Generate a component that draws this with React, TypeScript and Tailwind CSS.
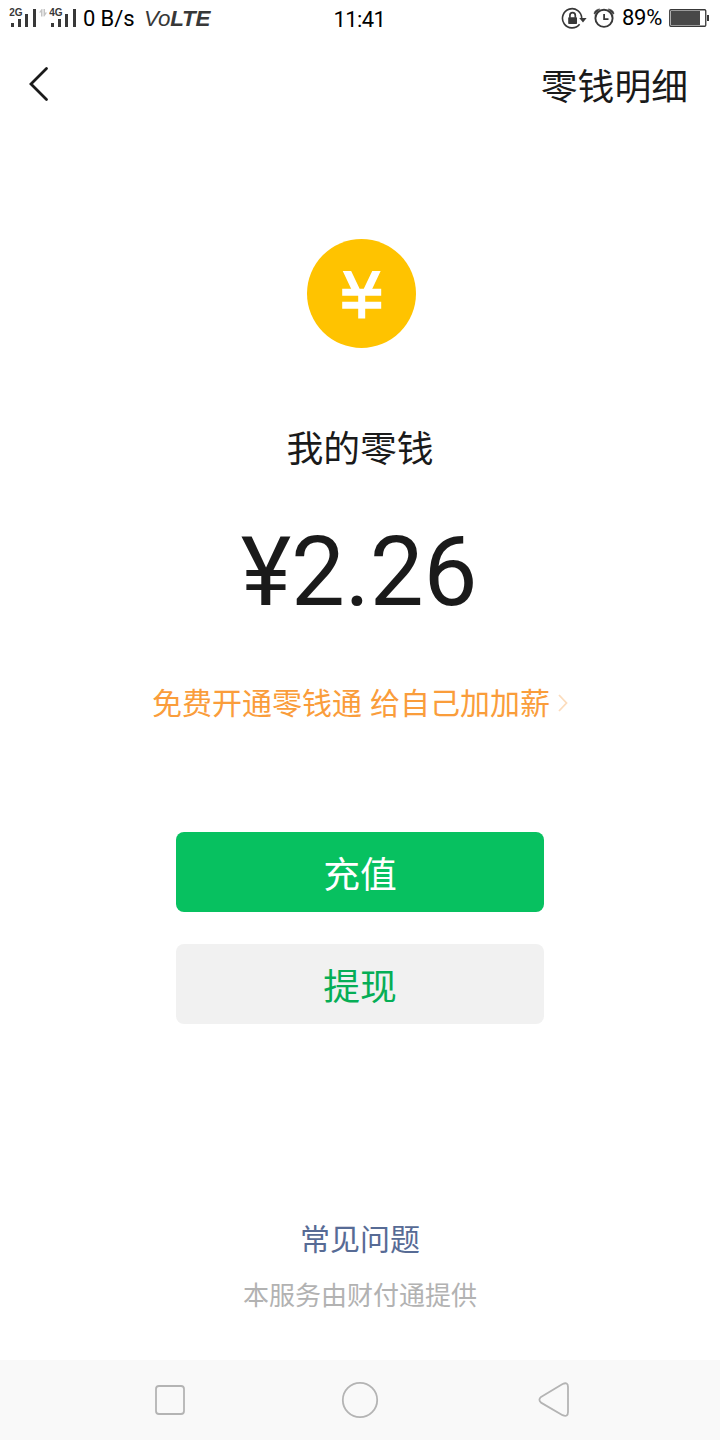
function SignalBars({ label }: { label: string }) {
  return (
    <svg width="28" height="26" viewBox="0 -6 28 26" className="shrink-0">
      <text x="0.3" y="7.4" fontSize="10" fontWeight="700" fill="#383838" fontFamily="Liberation Sans, sans-serif">
        {label}
      </text>
      <g fill="#383838">
        <rect x="2" y="14" width="3" height="4" />
        <rect x="9" y="10" width="3" height="8" />
        <rect x="16" y="5" width="3" height="13" />
        <rect x="24" y="0" width="3" height="18" />
      </g>
    </svg>
  );
}

function SignalStatus() {
  return (
    <div className="flex pt-[3px]">
      <SignalBars label="2G" />
      <svg width="8" height="8" viewBox="0 0 8 8" className="ml-[2px] mt-1.5">
        <path d="M0 3.6L2.6 0h.9v7.4H2V3.6zM4.5 0H6v3.6h2L5.4 7.4h-.9z" fill="#c4c4c4" />
      </svg>
      <div className="ml-[2px]">
        <SignalBars label="4G" />
      </div>
    </div>
  );
}

function StatusBar() {
  return (
    <div className="grid h-10 grid-cols-[1fr_auto_1fr] pl-[9px] pr-[10px] text-[22px] leading-[37px] text-black">
      {/* Left */}
      <div className="flex">
        <SignalStatus />
        <span className="ml-1.5 w-[61px] whitespace-nowrap tracking-[-0.1px]">0 B/s</span>
        <span className="whitespace-nowrap font-['Liberation_Sans'] text-[22.4px] italic leading-[38px] tracking-[-0.2px] text-[#383838]">
          Vo<b>LTE</b>
        </span>
      </div>

      {/* Center */}
      <div className="tracking-[-0.6px] leading-[39px]">11:41</div>

      {/* Right */}
      <div className="flex justify-end">
        <svg width="26" height="24" viewBox="0 0 26 24" className="mt-[7px]">
          <path d="M18.6 17.3A9.6 9.6 0 1 1 20.7 11.3" fill="none" stroke="#383838" strokeWidth="1.6" />
          <path d="M18.2 11h7.4l-3.6 4.6z" fill="#383838" />
          <rect x="7.2" y="10.2" width="8.8" height="6.8" rx="0.7" fill="#383838" />
          <path d="M8.9 10.8V8.4a2.7 2.7 0 0 1 5.4 0v2.4" fill="none" stroke="#383838" strokeWidth="1.7" />
        </svg>
        <svg width="22" height="22" viewBox="0 0 22 22" className="ml-[6px] mt-[7px]">
          <g fill="none" stroke="#383838">
            <circle cx="11" cy="11.3" r="8.6" strokeWidth="1.9" />
            <path d="M11.1 6.9v5.3h4.4" strokeWidth="1.8" />
          </g>
          <path d="M1 6.8Q1.6 2.4 6.8 2L1.9 6.9zM21 6.8Q20.4 2.4 15.2 2L20.1 6.9z" fill="#383838" stroke="#383838" strokeWidth="0.6" />
        </svg>
        <span className="ml-[7px] w-[47px] whitespace-nowrap leading-[36px] tracking-[-0.3px]">89%</span>
        <svg width="41" height="20" viewBox="0 0 41 20" className="mt-2">
          <rect x="0.75" y="1.75" width="36" height="16.5" rx="1" fill="none" stroke="#383838" strokeWidth="1.3" />
          <rect x="2" y="3" width="29" height="14" fill="#484848" />
          <rect x="38" y="7" width="2" height="6" fill="#383838" />
        </svg>
      </div>
    </div>
  );
}

function CoinIcon() {
  return (
    <div className="ml-[3px] mt-[111px] flex size-[109px] items-center justify-center rounded-full bg-[#ffc300]">
      <svg width="40" height="48" viewBox="0 0 40 48" fill="none" stroke="#fff" className="mt-[3px]">
        <path d="M4 -2L14.2 19.5M35.4 -2L25.2 19.5" strokeWidth="7.6" />
        <path d="M0.2 21.3h39M0.2 34.3h39M19.7 17.8V47.5" strokeWidth="7" />
      </svg>
    </div>
  );
}

function NavBar() {
  return (
    <nav className="flex h-20 items-center bg-[#f9f9f9]">
      <svg width="720" height="80" viewBox="0 0 720 80" fill="none" stroke="#b4b4b4" strokeWidth="1.8" strokeLinejoin="round">
        <rect x="156" y="26" width="28" height="28" rx="3" />
        <circle cx="360" cy="40" r="17.2" />
        <path d="M541 36.9L562.6 24Q568 21.6 568 27V52Q568 57.5 562.6 55.2L541 42.6Q537.8 39.8 541 36.9z" />
      </svg>
    </nav>
  );
}

export default function App() {
  return (
    <div
      lang="zh-CN"
      className="flex h-[1440px] w-[720px] flex-col overflow-hidden bg-white font-['Roboto','Noto_Sans_CJK_SC',sans-serif] text-[#1a1a1a]"
    >
      <StatusBar />

      <header className="flex h-[88px] items-center justify-between pl-7 pr-8 font-['Noto_Sans_CJK_SC',sans-serif]">
        <svg width="22" height="36" viewBox="0 0 22 36">
          <path d="M18.5 2.5L3 18l15.5 15.5" fill="none" stroke="#1a1a1a" strokeWidth="2.8" strokeLinecap="round" />
        </svg>
        <h1 className="text-[36.8px] leading-[88px]">零钱明细</h1>
      </header>

      <main className="flex flex-1 flex-col items-center font-['Noto_Sans_CJK_SC',sans-serif]">
        <CoinIcon />

        <h2 className="mt-[70px] text-[36.8px] leading-[56px]">我的零钱</h2>

        <p className="mr-0.5 mt-[38px] font-['Roboto'] text-[96px] leading-[120px] tracking-[-0.2px]">¥2.26</p>

        <a className="mt-[49px] flex items-center text-[30px] leading-[40px] text-[#fa9d3b]">
          免费开通零钱通<span className="w-2" />
          给自己加加薪
          <svg width="10" height="18" viewBox="0 0 10 18" className="ml-2 mt-[3px]">
            <path d="M1 1l7.5 8L1 17" fill="none" stroke="#fcdcbc" strokeWidth="1.8" />
          </svg>
        </a>

        <div className="mt-[111px] flex w-[368px] flex-col gap-8 text-[36.8px] leading-[80px]">
          <button className="h-20 rounded-lg bg-[#07c160] text-white">充值</button>
          <button className="h-20 rounded-lg bg-[#f1f1f1] text-[#06ae56]">提现</button>
        </div>

        <a className="mt-[193px] text-[30px] leading-[40px] text-[#576b95]">常见问题</a>
        <p className="mt-[17px] text-[26px] leading-[40px] text-[#b2b2b2]">本服务由财付通提供</p>
      </main>

      <NavBar />
    </div>
  );
}
